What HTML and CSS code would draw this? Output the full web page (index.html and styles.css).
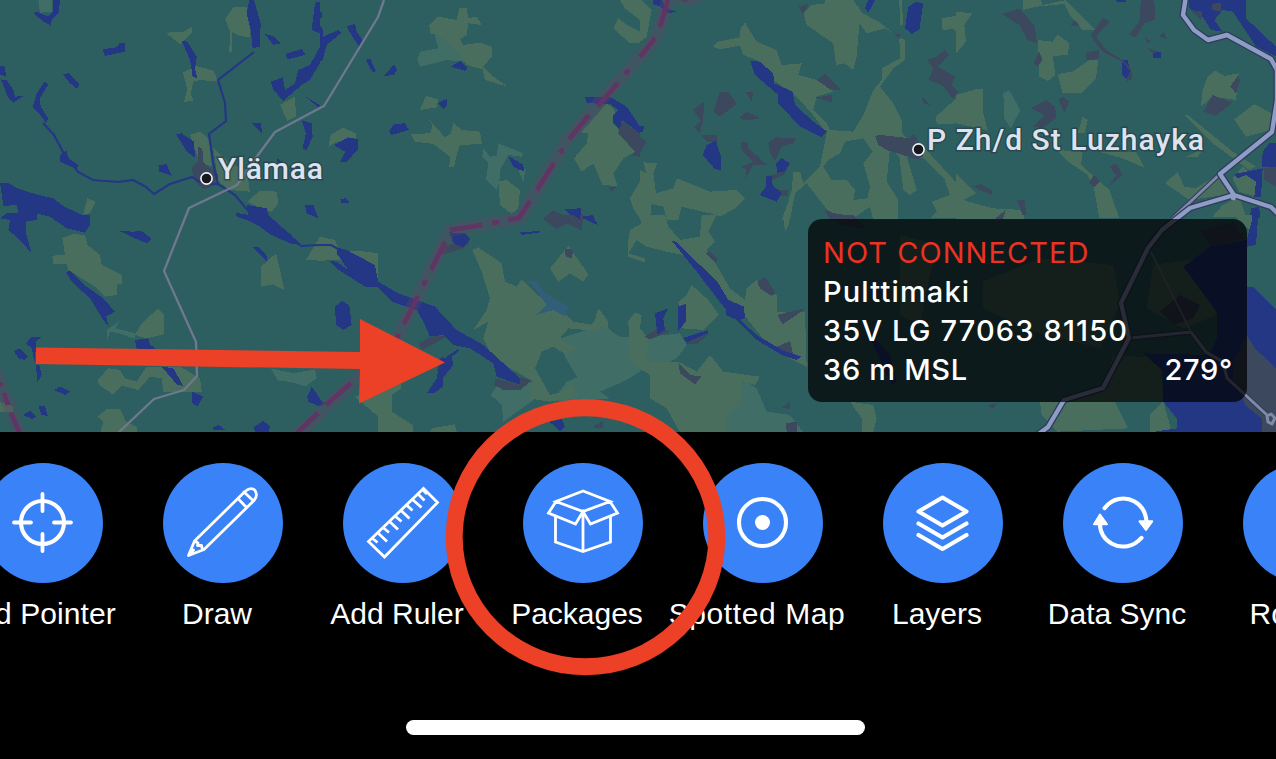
FILE: index.html
```html
<!DOCTYPE html>
<html lang="en">
<head>
<meta charset="utf-8">
<title>Map</title>
<link rel="stylesheet" href="styles.css">
</head>
<body>
<main class="app">
  <section class="map">
    <svg class="map-art" width="1276" height="432" viewBox="0 0 1276 432">
      <!-- Land cover: each group is one map tile, drawn at three units per pixel -->
      <g class="cover">
        <g transform="scale(.33333)">
          <path class="pale" d="M115 0H155V35L120 38Z"/>
          <path class="green" d="M676 58L700 20L740 20L745 45L752 112L720 108L695 95V155H688L690 95ZM498 98L550 95L575 82V100L540 132ZM548 218L590 198L640 212L655 245L600 240L580 245L572 280L580 302L552 306L562 265ZM840 315L885 290L888 350L862 362ZM570 405L600 395L625 415L640 500L600 490ZM640 445L690 490L740 510L750 575L690 570L655 545ZM742 605L780 572L830 575L835 610L815 635L780 625ZM262 595L287 605L270 640L250 642Z"/>
          <path class="town" d="M595 440L607 445L610 485L625 500L655 525L650 553L612 568L585 545L575 505L595 485Z"/>
          <path class="water" d="M160 0H180L176 40L155 60L152 77L130 65L100 40L110 35L145 50L158 35ZM308 148L350 142L360 128L375 130V155L315 168ZM188 222L205 220L238 250L232 267L210 250ZM135 243L144 255L120 295L122 320L145 355L138 370L125 350L98 322L110 280ZM0 198L15 200L18 228L0 225ZM3 238L20 240L40 270L45 290L70 288L40 308L25 295ZM545 122L562 125L590 170L585 205L592 235L578 230L570 180ZM748 0H762L782 70L780 140L758 145L752 90L740 40ZM795 102L820 108L842 130L820 135ZM856 162L905 147L917 165L862 178ZM945 8L960 5V100L935 90ZM960 140V190L930 240L905 255L850 302L820 270L812 245L848 232L855 270L885 250L895 210L930 195ZM528 402L545 400L582 425L585 473L560 455ZM475 495L500 493L515 527L478 515ZM755 370H782L788 403ZM905 360L935 370L938 410L920 450L908 445L918 400ZM916 290L960 315L955 322ZM180 465L200 452L205 475L235 495L230 508L180 485ZM0 548L25 550L60 568L115 585L160 595L190 618L235 640L270 655L255 698L200 685L150 650L110 640V660L78 665V700L95 760L60 720L25 690L30 660L0 655L20 640H55L50 615L10 618ZM740 615L800 625L808 660L825 690L870 700L900 740L860 712L805 695L770 670L710 650L707 638L745 645ZM915 615H940L955 655L920 640ZM830 475L870 500L835 495Z"/>
        </g>
        <g transform="translate(320 0) scale(.33333)">
          <path class="green" d="M328 75L355 50L410 60L418 25H442L443 55L470 50L485 75L445 70L440 105L420 118L430 135L480 128L515 140V170L490 200L520 230L563 260L495 240L488 208L440 195L415 155L350 105L330 100ZM300 330L318 288L355 298L350 322ZM25 440L32 405L68 383L108 400V415L50 425ZM272 402L330 400L338 375L316 345L350 385L375 412L393 400L400 370L425 390L480 395L486 432L420 435L410 465L402 502L388 500L390 470L340 432L285 425ZM535 545L560 540L600 570L595 625L575 642L540 615ZM860 310L885 330L880 370L905 400L945 455L910 475L880 520L892 558L848 555L820 490L785 515L762 475L800 430L805 400H780ZM880 85L895 55L920 75L960 95V130H930ZM900 0H960V60L915 25ZM930 595L960 545V655L940 625Z"/>
          <path class="pale" d="M350 100L415 155L435 185L380 180L340 190L300 200L292 180L300 155L355 145L345 110ZM535 430L610 460L605 470L565 465L540 510L538 545L530 570L498 540L505 490L487 470L490 445L510 470L530 468ZM595 510L617 508L610 545Z"/>
          <path class="town" d="M900 360L960 400V470L935 468L945 455L895 400ZM860 560H892L875 575ZM670 655L700 630L750 655L790 640L780 690L740 670Z"/>
          <path class="water" d="M0 35H6V55H0ZM0 75L10 90V110L55 90L65 98L20 135L8 180L0 185ZM80 78L105 72L110 95L130 125L120 145L90 98ZM138 180L150 175L168 212L158 218ZM192 228L222 193L232 210L220 225ZM393 200L420 183L443 203L435 212ZM352 310L380 297V318L370 327ZM207 395L222 372L255 370L267 390L215 405ZM42 435L85 412L113 418V450L80 485H60L75 455ZM60 597L78 595L90 610H65ZM565 468L610 495L612 515L580 500ZM795 292L870 290L920 320L960 380V400L905 360L900 387L880 370V345L895 330L870 312H840L800 308ZM735 627L782 625L785 650L820 645L825 660L760 655Z"/>
        </g>
        <g transform="translate(640 0) scale(.33333)">
          <path class="green" d="M0 0H5L35 30L20 110L0 125ZM218 140L235 125L300 112L302 85L315 68L350 125L410 150L425 195L485 190L475 225L530 240L580 275L530 290L520 330L560 370L570 390L640 395L670 345L700 270L725 240V205L780 175L778 110L735 85L680 100L658 70L650 170L640 210L615 190L588 195L580 130L500 75L490 40L515 15L555 10L555 0H640L668 40L720 68L760 100L795 120V180L760 205L720 260L760 310L785 360L788 405L850 440L960 560V655H870L890 635L875 605L930 585L915 540L850 475L800 470L830 570L810 585L790 570L778 470L750 445L740 545L775 600V660H700L690 620L640 655L570 640L500 550L465 580L450 660H425L440 620L455 570L460 515H480L490 550L540 500L560 400L515 340L470 290L400 240L350 180L310 165L300 137L240 148ZM778 0H785L790 75H780ZM905 55L960 45V110L940 85L908 92ZM888 350L960 285V370L890 372ZM10 487L52 490L40 520L48 580L100 565L110 535L210 575L290 570L315 595L285 625L240 650L210 640L125 620L115 660H80L70 620L35 612L30 655H0V510L20 520Z"/>
          <path class="ground" d="M550 500L565 480L600 460L615 425L670 415L698 455L670 490L690 560L682 595L640 600L645 570L620 540L575 540Z"/>
          <path class="town" d="M475 20L505 12L490 42ZM530 240L555 222L605 270L570 268ZM528 292L575 285V308ZM240 275H265L290 312L240 350L220 335ZM315 275H340L335 305ZM158 330L192 305L190 360L180 400L162 382L182 362ZM298 352L320 335L362 355L315 362ZM302 425H325V445L382 495H340L315 540L320 510L303 500L340 485L305 450ZM385 430L405 412L468 415L460 430L425 440L405 485L390 460ZM183 405H230V430L200 425ZM705 408L720 405L810 415L820 400L850 445V470L830 478L740 450L715 435ZM760 100L782 103L780 118ZM860 180L890 170L915 150L928 165L895 200L945 230L935 255L955 275L940 297L905 255L865 240L880 205ZM845 290L870 315L850 310ZM555 630L585 640L645 650V660H570ZM0 410L20 425L0 460ZM375 530L430 515L440 520L400 540ZM415 570H443V588H420ZM120 0H148L135 8Z"/>
          <path class="water" d="M38 0H65L80 25L108 35L85 40L60 20L38 12ZM680 10L685 0H705L685 38L675 25ZM805 20L825 7L850 8L838 90L815 102L795 85ZM330 182H355L400 220L402 250L458 275L465 315L520 365L562 395L545 412L480 380L415 310V285L345 225ZM188 465L200 435L228 422L243 470V510L225 508ZM408 490L425 475L450 490L435 515L412 518ZM378 530L395 528L398 555L425 580L410 605L358 585L378 560ZM0 377L14 378L8 395L0 397Z"/>
        </g>
        <g transform="translate(956 0) scale(.33333)">
          <path class="green" d="M0 35L48 40L25 75L30 125L0 160ZM200 0H255L260 15L330 0L420 90H380L345 50L325 12L240 20L200 30ZM245 120L290 125L305 103L340 130L335 165L290 168L298 225L275 243L250 230ZM305 222L350 215L400 180H427L420 235L375 280H320ZM0 285L60 268H82V340L95 390L0 370ZM740 270L755 230L778 212L805 228L848 220L840 300L770 290L735 320ZM835 358L895 312L955 345L945 390L870 410ZM685 345H695L830 455L900 500L880 510L770 430ZM628 550L665 515L685 560L720 565L790 520L840 580L700 600ZM850 590L870 650H770L800 615ZM830 535L860 500L905 545L900 590L850 575ZM300 450L380 455L375 495L460 570L490 655H430L415 570L395 525L330 480ZM430 455H540L565 503L500 475ZM380 350L395 360L385 400H365ZM0 520L60 580L20 600L110 625L200 630L205 660H0ZM690 470L745 445L725 470Z"/>
          <path class="pale" d="M142 280L160 272L193 330L165 385L145 355Z"/>
          <path class="water" d="M480 0H510V6H485ZM590 155H615V173H590ZM498 180H515L522 212L512 238L498 222ZM697 0H870V55L960 140V170L900 140L850 65L830 35L800 30L775 60L800 95L765 90L740 50L700 25ZM920 455L940 430H960V500H918ZM835 522L870 515L920 505L915 590H895L900 545L870 525L845 535ZM885 625L910 620L912 655H882Z"/>
          <path class="town" d="M138 43L190 25L235 75L243 130L215 120L190 75ZM232 190L250 155L260 180L245 198ZM345 80L355 58L370 75ZM405 105L440 52L460 65L420 110L450 150L500 180L525 205L530 235L510 248L522 212L500 185L440 155L415 125ZM390 158L430 150L428 178L390 180ZM555 0H595L597 60L565 70L540 112L518 105L550 65ZM565 108L585 125L575 130ZM610 110L622 95L633 118ZM577 145L610 155L590 160ZM225 325L270 300L298 320L300 355L260 385L232 380L265 345ZM308 300L320 290L340 305L325 338ZM742 335L770 285L828 308L780 348ZM823 260L845 228L852 240L840 280ZM460 500L480 490L500 525L460 557L480 525ZM398 548L415 525L433 545L415 563ZM50 560L75 552L113 575L105 585ZM182 600H205L212 645H200ZM118 655L150 630L140 660ZM925 505L960 500V560L925 540ZM768 12L795 8V35L768 30ZM703 30L740 35L735 60Z"/>
        </g>
        <g transform="translate(0 215) scale(.33333)">
          <path class="green" d="M187 68L220 57L255 60L262 90L300 120L305 150L365 180L368 205L350 210V240L315 245L285 215L205 165L200 148H160L157 122L195 120ZM405 360L425 325L475 280L492 300V358L440 370ZM783 155L828 115L840 165L853 225L818 208L783 215ZM293 495L325 460L360 465L375 490L410 500L440 455L540 455L600 490L605 530H490L485 490L450 485L415 525L365 512L338 538L298 510ZM292 605L320 582H360L378 620L410 635V655H300L310 620ZM918 135L960 65V137ZM0 560L40 575L38 590H0Z"/>
          <path class="pale" d="M320 345L360 318L345 340L405 355V372L360 355L330 350L322 375ZM812 460L880 475L945 463L950 490L915 515L870 500L835 498Z"/>
          <path class="water" d="M145 0H270V30L255 52L200 30ZM358 48L400 50L425 48L455 72L440 85L400 68ZM198 172L210 168L260 215L310 250L345 290L318 305L328 337L310 315L270 250L215 200ZM78 385L95 365H125L108 380L105 445L95 400ZM42 408L60 400L83 425L75 435L55 430ZM405 375L445 370L450 388L468 402H410ZM108 450H118L125 480L112 502ZM162 525L180 515L210 530L195 540ZM115 572H135L143 603L125 600ZM68 600L90 588L107 605L98 612ZM485 455L520 460L550 513L530 508ZM577 530L610 545L592 575L577 565ZM637 638L655 630L677 645H640ZM762 635L790 618L812 635L805 652H765ZM922 545L935 515L960 550V575L925 560ZM758 97H775L800 122V137ZM710 0H805L850 40L905 90L870 85L810 58L780 35L750 20Z"/>
        </g>
        <g transform="translate(320 215) scale(.33333)">
          <path class="pale" d="M720 370L800 345L830 310L895 365H960V470L920 495L840 530L870 550L750 560L700 555L740 500L772 487L735 425ZM512 540L530 515L640 500L660 540L620 570L550 620L545 570Z"/>
          <path class="green" d="M0 65L45 75L60 110L120 108L175 115V200L90 160L60 135L0 137ZM457 105L475 97L545 145L555 200L590 215L605 193L680 265L740 300L760 320L790 325L820 330L835 280L865 320V350L800 345L745 340L720 370L770 400L740 420L700 395L665 410L645 460L690 540L730 530L755 500L775 545L690 560L625 550L640 500L520 430L490 370L505 320L460 345L500 285L510 250L485 170ZM690 160L745 92L805 178L790 200L750 175L715 200ZM105 545L240 500L245 520L215 540V590L278 630V650H175V605ZM335 640L405 628L410 650H330ZM930 310L960 295V445L935 430Z"/>
          <path class="stream" d="M620 198H650L675 235L745 275L735 305L700 285L648 300L680 270L650 225Z"/>
          <path class="town" d="M365 120L372 90L445 85L430 100ZM297 385L330 365L385 362L345 385L305 405ZM510 415L540 440L525 445ZM525 490L600 510V485L635 497L600 525H550L523 510ZM352 440L370 420V470L352 468ZM735 100L760 105L755 130L737 125ZM668 12L710 0H790L785 48L750 20L710 42ZM820 632L850 618V640H825Z"/>
          <path class="water" d="M388 52L435 55L452 72L430 98L400 85ZM55 98L80 105L165 150L175 200L235 235L345 275L410 345L490 390L600 490V510L530 485L520 445L450 400L400 390L370 360L330 365L310 320L290 285L220 262L170 215H135L80 180L85 165L50 115ZM30 138L50 140L85 165L80 180L50 160ZM45 275L65 258L88 270L95 330L70 345L48 330ZM600 52L660 48V52L605 60ZM760 0H780V15ZM790 5H815L838 32L800 15ZM362 430L395 425L400 450L368 490V515L345 533H322L350 490ZM380 425L412 403L418 407L390 430ZM688 620L725 612L735 635L720 648ZM0 555L15 565L0 575Z"/>
        </g>
        <g transform="translate(600 215) scale(.33333)">
          <path class="pale" d="M0 330L60 365H150L240 355L260 390L230 430L150 470L70 460L0 490ZM380 520L440 500L470 520L500 590L570 600L610 652H380Z"/>
          <path class="green" d="M0 285L25 320L0 330ZM85 75L90 45L125 25L115 0H195L205 35L240 75L300 65L305 0H350L325 50L345 80L320 105L355 160L390 220L435 255L440 220L470 195L530 240V290L615 290L620 455L560 425L500 385L440 310L300 170L250 120L200 110L140 95L110 75L85 115L135 130V143L85 125ZM235 260L260 240L275 210L325 255L357 300L310 345L245 340ZM85 320L105 292L125 300L120 340L145 370L140 440L235 440L290 470L330 420L370 470L480 485L465 510L430 500L420 570L380 600V652H240L200 580L150 550V480L90 440ZM750 560L820 570L830 610L820 650H785V610ZM550 0H568V25L555 52Z"/>
          <path class="town" d="M472 200L495 185L527 235L515 243L480 220ZM532 300L560 292L618 280L548 328ZM317 115L330 108L352 130L348 143ZM133 365L180 335L208 350L150 373ZM235 445L270 480L305 485L285 508L240 475ZM520 400L570 378L580 420H555ZM250 385L330 355L290 388ZM545 578L570 560V582ZM558 625L590 620V650H560ZM0 620H8V640H0ZM690 0H760L800 40L720 30Z"/>
          <path class="water" d="M216 78L228 80L300 150L355 205L385 255L432 275L435 310L420 315L470 360L545 405L605 425L590 435L545 420L470 375L410 315L378 300V285L290 170ZM165 295L205 280L190 310L195 345L172 358ZM233 275L257 267V320L235 348ZM247 370L325 345V355L260 382ZM790 330L870 420L890 500L875 510L820 390Z"/>
        </g>
        <g transform="translate(900 215) scale(.33333)">
          <path class="green" d="M1000 0H1055V50L1030 30ZM420 560H645L685 640L470 650L425 600ZM750 600L790 560L815 650H750ZM250 200L420 130L640 150L660 265L600 400L400 350L250 280ZM760 150L900 130L950 300L850 340L740 280ZM640 420L780 430L790 560H500L620 500ZM0 60L120 90L90 180L60 330L0 300Z"/>
          <path class="water" d="M850 155L930 95L1040 75L1060 0H1075L1068 90L1040 95V215L1060 215L1128 285V652H750L830 640V610L790 560V470L730 415L930 420L950 370V290Z"/>
          <path class="town" d="M1040 360L1065 400L1128 460V655H1085V610L1040 575L1000 500V440ZM900 50L1000 20L1030 70L930 95ZM780 290L840 240L900 270L880 310L820 330ZM260 570L290 565L280 582Z"/>
          <path class="green" d="M755 600L790 562L812 640L780 645Z"/>
        </g>
      </g>
      <!-- Rivers -->
      <path class="river" d="M43 123L54 135L63 152L78 172L93 180L118 182L133 180L146 187L154 194L170 184L192 177L200 182L213 184L218 184L235 195L250 213M218 184L213 163L209 134L226 121L225 103L218 80L254 52M300 246L320 245L331 245L340 250"/>
      <!-- Roads -->
      <path class="road-small" d="M384 0L378 17L324 106L320 108L275 132L258 155L237 185L189 208L164 271L196 342L197 376L184 390L154 399L119 432"/>
      <path class="road-casing thin" d="M1220 174L1172 219M1130 338L1191 332L1206 352L1223 362L1227 378L1267 415"/>
      <path class="road-link" d="M1220 174L1172 219M1130 338L1191 332L1206 352L1223 362L1227 378L1267 415"/>
      <path class="road-track" d="M1151 252L1191 332"/>
      <path class="road-casing" d="M1186-4L1183 15L1194 30L1208 40L1227 35L1271 59L1277 70L1277 100L1272 132L1220 174L1234 195L1190 208L1162 230L1148 248L1121 303L1129 338L1103 388L1064 400L1048 427L1036 436M1234 195L1271 207L1278 214"/>
      <path class="road-main" d="M1186-4L1183 15L1194 30L1208 40L1227 35L1271 59L1277 70L1277 100L1272 132L1220 174L1234 195L1190 208L1162 230L1148 248L1121 303L1129 338L1103 388L1064 400L1048 427L1036 436M1234 195L1233 200M1234 195L1271 207L1278 214"/>
      <path class="road-link" d="M1267 416L1271 414L1275 418L1272 424L1268 422Z"/>
      <!-- National border -->
      <path class="border-halo" d="M669-4L660 27L655 40L603 98L567 140L520 218L450 230L397 338L375 366L352 383L296 436M-4 372L20 434M669-4L690 0L700-4"/>
      <path class="border-line" d="M669-4L660 27M655 38L640 57M629 70L625 74M618 83L598 106M589 115L569 139M563 149L560 153M554 163L537 190M530 201L519 218L508 220M499 222L492 223M482 225L450 230M445 242L431 270M426 280L423 286M418 296L404 324M399 334L396 340M351 383L326 405M318 413L296 434M0 383L2 386M4 393L8 405M11 413L20 434"/>
      <circle class="place" cx="206.500" cy="178.500" r="5.600"/>
      <circle class="place" cx="918.500" cy="149.500" r="5.600"/>
      <text class="place-name" x="218" y="179" textLength="105">Ylämaa</text>
      <text class="place-name" x="927" y="149.500" textLength="277">P Zh/d St Luzhayka</text>
    </svg>
    <aside class="status">
      <div class="offline">NOT CONNECTED</div>
      <div class="station">Pulttimaki</div>
      <div class="grid-ref">35V LG 77063 81150</div>
      <div class="split"><span>36 m MSL</span><span class="bearing">279°</span></div>
    </aside>
  </section>

  <nav class="toolbar">
    <div class="tool">
      <svg class="disc" viewBox="0 0 120 120"><g class="ink w4"><circle cx="59.500" cy="59.500" r="21.500"/><path d="M59.500 31V48M59.500 71V88M31 59.500H48M71 59.500H88" stroke-width="3.800"/></g></svg>
      <span class="label wide">Add Pointer</span>
    </div>
    <div class="tool">
      <svg class="disc" viewBox="0 0 120 120"><g class="ink w3"><path d="M25.500 92.500L31.500 78L82 28.500C86 24.500 90 25 92 27.500C94 30.500 94 34 91 37.500L41 86.500ZM31.500 78L35 80L34.500 82.500L38.500 82.500L39.500 87M26 92L30.500 87M75 35.500L83.500 44.500M81 29L90 37.500"/></g></svg>
      <span class="label">Draw</span>
    </div>
    <div class="tool">
      <svg class="disc" viewBox="0 0 120 120"><g class="ink w3 square"><path d="M25.500 78.500L80.500 25.500L94.500 39.500L41.500 94ZM29 75L34.500 79.500M34.500 69.500L44 78.500M40 64.500L46 69.500M46.500 58.500L55 66.500M52 53L58.500 58.500M58 47.500L66.500 55.500M63.500 42L69.500 47.500M69.500 36.500L78.500 44.500M75 31L81.500 37.500"/><path d="M79.500 26.500L84 31"/></g></svg>
      <span class="label">Add Ruler</span>
    </div>
    <div class="tool">
      <svg class="disc" viewBox="0 0 120 120"><g class="ink w3 square"><path d="M60 28L33 38.500L60 48.500L87 38.500ZM33 38.500L25.500 50L52.500 61L60 48.500L67.500 61L94.500 50L87 38.500M32.500 54V79L60 88.500L87.500 79V54M60 49V88"/></g></svg>
      <span class="label">Packages</span>
    </div>
    <div class="tool">
      <svg class="disc" viewBox="0 0 120 120"><g class="ink w4"><circle cx="59.500" cy="59.500" r="23.500"/></g><circle cx="59.500" cy="59.500" r="7.500" fill="#fff"/></svg>
      <span class="label wider">Spotted Map</span>
    </div>
    <div class="tool">
      <svg class="disc" viewBox="0 0 120 120"><g class="ink w4"><path d="M59.500 34.500L83.500 48.500L59.500 62.500L35.500 48.500ZM35.500 60.500L59.500 74.500L83.500 60.500M35.500 72L59.500 86L83.500 72"/></g></svg>
      <span class="label">Layers</span>
    </div>
    <div class="tool">
      <svg class="disc" viewBox="0 0 120 120"><g class="ink w4"><path d="M41.500 45.200C49 35 62 33 71.500 38.500C79.500 43 83 50 83.500 59M78.500 74.800C71 84 58 86 48.500 80.500C40.500 76 37 69 36.800 60"/></g><path d="M31 61.300L37 51.500L44 61.300ZM76.500 58.300H89.200L83 67Z" fill="#fff" stroke="#fff" stroke-width="2" stroke-linejoin="round"/></svg>
      <span class="label">Data Sync</span>
    </div>
    <div class="tool">
      <svg class="disc" viewBox="0 0 120 120"></svg>
      <span class="label">Routes</span>
    </div>
  </nav>
  <div class="home-bar"></div>

  <svg class="callout" width="1276" height="759" viewBox="0 0 1276 759">
    <path d="M36 347.500L360 352V319L445 362.500L359 403.500L360 369L36 364Z" fill="#ec4027"/>
    <ellipse cx="585.500" cy="537.200" rx="131.300" ry="129.500" fill="none" stroke="#ec4027" stroke-width="17"/>
  </svg>
</main>
</body>
</html>
```
FILE: styles.css
```css
body {
  margin: 0;
  background: #000;
}

.app {
  position: relative;
  width: 1276px;
  height: 759px;
  overflow: hidden;
  display: flex;
  flex-direction: column;
  background: #000;
  color: #fff;
}

.map {
  position: relative;
  height: 432px;
  flex: none;
  background: #2d5f60;
  overflow: hidden;
}

.map-art {
  display: block;
}

.cover { shape-rendering: crispEdges; }
.green { fill: #496e5e; }
.pale { fill: #416d67; }
.town { fill: #3c485d; }
.water { fill: #233784; }
.stream { fill: #315e78; }
.ground { fill: #2d5f60; }

.river {
  fill: none;
  stroke: #233784;
  stroke-width: 2.2;
}

.road-small,
.road-link,
.road-track,
.road-casing,
.road-main {
  fill: none;
  stroke-linejoin: round;
}

.road-small { stroke: #70788f; stroke-width: 2.3; }
.road-link { stroke: #7f8aa8; stroke-width: 3; }
.road-track { stroke: #6f7893; stroke-width: 1.6; }
.road-casing { stroke: #303b5b; stroke-width: 7; }
.road-casing.thin { stroke-width: 5; }
.road-main { stroke: #8e9dc5; stroke-width: 4.4; }

.border-halo {
  fill: none;
  stroke: rgba(104, 64, 100, 0.32);
  stroke-width: 13;
  stroke-linejoin: round;
}

.border-line {
  fill: none;
  stroke: #613463;
  stroke-width: 4.6;
}

.place {
  fill: #17181d;
  stroke: #f0f2f5;
  stroke-width: 1.6;
}

.place-name {
  font: 500 30px Roboto, Inter, sans-serif;
  fill: #dde3ee;
  stroke: rgba(38, 65, 75, 0.75);
  stroke-width: 3px;
  paint-order: stroke;
}

.status {
  position: absolute;
  left: 808px;
  top: 219px;
  width: 439px;
  height: 183px;
  box-sizing: border-box;
  padding: 14px 15px 13px;
  border-radius: 14px;
  background: rgba(0, 0, 0, 0.72);
  font: 500 29px/39px Inter, "Liberation Sans", sans-serif;
  letter-spacing: 0.7px;
  white-space: nowrap;
}

.offline {
  color: #eb3223;
  font-weight: 400;
  letter-spacing: 1.05px;
}

.station,
.grid-ref {
  letter-spacing: 1.15px;
}

.bearing {
  margin-right: -1px;
}

.split {
  display: flex;
  justify-content: space-between;
}

.toolbar {
  display: flex;
  flex: none;
  margin-left: -47px;
  padding-top: 31px;
}

.tool {
  flex: none;
  width: 180px;
  display: flex;
  flex-direction: column;
  align-items: center;
}

.disc {
  width: 120px;
  height: 120px;
  border-radius: 50%;
  background: #3a82f7;
}

.ink {
  fill: none;
  stroke: #fff;
  stroke-linecap: round;
  stroke-linejoin: round;
}

.w3 { stroke-width: 2.8; }
.w4 { stroke-width: 4.1; }
.square { stroke-linecap: butt; stroke-linejoin: miter; }

.label {
  margin-top: 13px;
  padding-right: 12px;
  font: 30px/35px "Liberation Sans", Arial, sans-serif;
  white-space: nowrap;
}

.label.wide { letter-spacing: 0.1px; }
.label.wider { letter-spacing: 0.6px; }

.home-bar {
  width: 459px;
  height: 15px;
  margin: 89px 0 0 406px;
  border-radius: 8px;
  background: #fff;
}

.callout {
  position: absolute;
  left: 0;
  top: 0;
}
```
